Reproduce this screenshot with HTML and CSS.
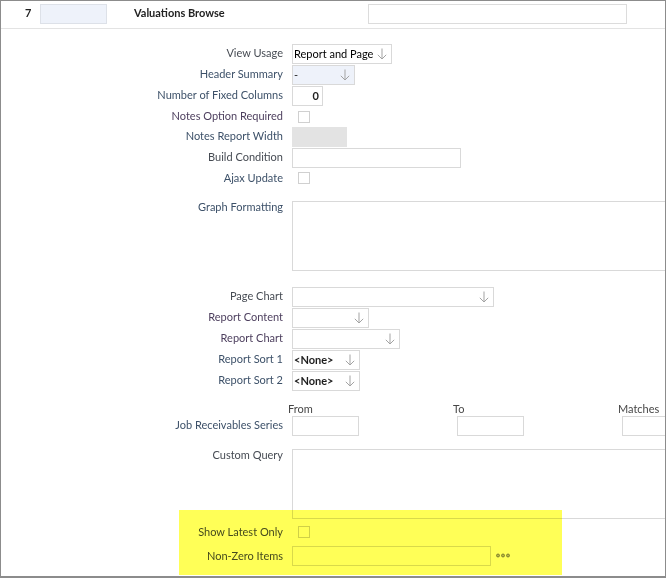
FILE: index.html
```html
<!DOCTYPE html>
<html>
<head>
<meta charset="utf-8">
<title>Valuations Browse</title>
<link rel="stylesheet" href="styles.css">
</head>
<body>
<div class="page">
  <div class="header">
    <span class="num">7</span>
    <span class="idbox"></span>
    <span class="title">Valuations Browse</span>
    <span class="hinput"></span>
  </div>

  <div class="form">
    <div class="row">
      <label class="lbl c-dark">View Usage</label>
      <div class="select w100"><span class="val strong">Report and Page</span><svg class="arrow" width="10" height="12" viewBox="0 0 10 12"><path d="M5 0.5V11M0.8 6.8L5 11L9.2 6.8" fill="none" stroke="#a3a3a3" stroke-width="1"/></svg></div>
    </div>
    <div class="row">
      <label class="lbl c-blue">Header Summary</label>
      <div class="select w63 tinted"><span class="val">-</span><svg class="arrow" width="10" height="12" viewBox="0 0 10 12"><path d="M5 0.5V11M0.8 6.8L5 11L9.2 6.8" fill="none" stroke="#a3a3a3" stroke-width="1"/></svg></div>
    </div>
    <div class="row">
      <label class="lbl c-blue">Number of Fixed Columns</label>
      <div class="input w31 num-input">0</div>
    </div>
    <div class="row chk first">
      <label class="lbl c-purple">Notes Option Required</label>
      <span class="cb"></span>
    </div>
    <div class="row">
      <label class="lbl c-blue">Notes Report Width</label>
      <div class="greybox"></div>
    </div>
    <div class="row">
      <label class="lbl c-dark">Build Condition</label>
      <div class="input w169"></div>
    </div>
    <div class="row chk">
      <label class="lbl c-blue">Ajax Update</label>
      <span class="cb"></span>
    </div>
    <div class="row tall graph">
      <label class="lbl c-blue">Graph Formatting</label>
      <div class="textarea"></div>
    </div>

    <div class="row pagechart">
      <label class="lbl c-dark">Page Chart</label>
      <div class="select w202"><span class="val"></span><svg class="arrow" width="10" height="12" viewBox="0 0 10 12"><path d="M5 0.5V11M0.8 6.8L5 11L9.2 6.8" fill="none" stroke="#a3a3a3" stroke-width="1"/></svg></div>
    </div>
    <div class="row">
      <label class="lbl c-purple">Report Content</label>
      <div class="select w77"><span class="val"></span><svg class="arrow" width="10" height="12" viewBox="0 0 10 12"><path d="M5 0.5V11M0.8 6.8L5 11L9.2 6.8" fill="none" stroke="#a3a3a3" stroke-width="1"/></svg></div>
    </div>
    <div class="row">
      <label class="lbl c-purple">Report Chart</label>
      <div class="select w108"><span class="val"></span><svg class="arrow" width="10" height="12" viewBox="0 0 10 12"><path d="M5 0.5V11M0.8 6.8L5 11L9.2 6.8" fill="none" stroke="#a3a3a3" stroke-width="1"/></svg></div>
    </div>
    <div class="row">
      <label class="lbl c-blue">Report Sort 1</label>
      <div class="select w68"><span class="val bold">&lt;None&gt;</span><svg class="arrow" width="10" height="12" viewBox="0 0 10 12"><path d="M5 0.5V11M0.8 6.8L5 11L9.2 6.8" fill="none" stroke="#a3a3a3" stroke-width="1"/></svg></div>
    </div>
    <div class="row">
      <label class="lbl c-blue">Report Sort 2</label>
      <div class="select w68"><span class="val bold">&lt;None&gt;</span><svg class="arrow" width="10" height="12" viewBox="0 0 10 12"><path d="M5 0.5V11M0.8 6.8L5 11L9.2 6.8" fill="none" stroke="#a3a3a3" stroke-width="1"/></svg></div>
    </div>

    <div class="row series">
      <label class="lbl c-blue">Job Receivables Series</label>
      <div class="series-grid">
        <div class="scol"><div class="shead">From</div><div class="input w67"></div></div>
        <div class="scol"><div class="shead">To</div><div class="input w67"></div></div>
        <div class="scol"><div class="shead">Matches</div><div class="input w67"></div></div>
      </div>
    </div>

    <div class="row tall custom">
      <label class="lbl c-dark">Custom Query</label>
      <div class="textarea"></div>
    </div>

    <div class="row chk latest">
      <label class="lbl c-dark">Show Latest Only</label>
      <span class="cb"></span>
    </div>
    <div class="row nonzero">
      <label class="lbl c-dark">Non-Zero Items</label>
      <div class="input w199"></div>
      <svg class="dots" width="14" height="5" viewBox="0 0 14 5"><circle cx="2" cy="2.5" r="1.5" fill="#b8b8b8" stroke="#6e6e6e" stroke-width="0.8"/><circle cx="7" cy="2.5" r="1.5" fill="#b8b8b8" stroke="#6e6e6e" stroke-width="0.8"/><circle cx="12" cy="2.5" r="1.5" fill="#b8b8b8" stroke="#6e6e6e" stroke-width="0.8"/></svg>
    </div>
  </div>

  <div class="highlight"></div>
</div>
</body>
</html>
```

FILE: styles.css
```css
html, body {
  margin: 0;
  padding: 0;
  background: #ffffff;
}

body {
  font-family: Lato, "Liberation Sans", Arial, sans-serif;
  font-size: 11px;
  color: #222;
}

.page {
  position: relative;
  box-sizing: border-box;
  width: 666px;
  height: 578px;
  border: 1px solid #8c8c8c;
  border-bottom-width: 2px;
  overflow: hidden;
  background: #fff;
}

/* header */
.header {
  box-sizing: border-box;
  height: 28px;
  display: flex;
  align-items: flex-start;
  padding: 3px 0 0 24px;
  border-bottom: 1px solid #e3e3e3;
}

.num {
  width: 15px;
  line-height: 18px;
  font-weight: 700;
  color: #222;
}

.idbox {
  box-sizing: border-box;
  width: 67px;
  height: 20px;
  background: #eef2fa;
  border: 1px solid #dde1e8;
}

.title {
  width: 234px;
  margin-left: 27px;
  line-height: 18px;
  font-weight: 700;
  color: #222;
}

.hinput {
  box-sizing: border-box;
  width: 259px;
  height: 20px;
  border: 1px solid #dcdcdc;
}

/* form */
.form {
  padding-top: 15px;
}

.row {
  display: flex;
  align-items: flex-start;
  height: 21px;
}

.lbl {
  flex: none;
  width: 282px;
  margin-right: 9px;
  text-align: right;
  line-height: 18px;
  white-space: nowrap;
}

.c-blue { color: #3d5169; }
.c-dark { color: #464b53; }
.c-purple { color: #4d3f5e; }

.select,
.input,
.textarea {
  box-sizing: border-box;
  flex: none;
  border: 1px solid #d9d9d9;
  background: #fff;
}

.select {
  height: 20px;
  display: flex;
  align-items: center;
  justify-content: space-between;
  padding: 0 4px 0 1px;
}

.select.tinted {
  background: #eef2fa;
}

.val {
  line-height: 16px;
  color: #222;
}

.val.strong {
  font-weight: 400;
  color: #000;
}

.val.bold {
  font-weight: 700;
  color: #1e1e1e;
}

.arrow {
  display: block;
  flex: none;
}

.input {
  height: 20px;
}

.num-input {
  text-align: right;
  padding-right: 3px;
  line-height: 17px;
  font-weight: 700;
}

.w31 { width: 31px; }
.w63 { width: 63px; }
.w67 { width: 67px; }
.w68 { width: 68px; }
.w77 { width: 77px; }
.w100 { width: 100px; }
.w108 { width: 108px; }
.w169 { width: 169px; }
.w199 { width: 199px; }
.w202 { width: 202px; }

.greybox {
  width: 55px;
  height: 20px;
  background: #e3e3e3;
}

.row.chk {
  height: 20px;
}

.cb {
  box-sizing: border-box;
  display: block;
  width: 12px;
  height: 12px;
  margin-left: 6px;
  margin-top: 3px;
  border: 1px solid #d0d0d0;
  background: #fff;
}

.row.chk.first .cb {
  margin-top: 4px;
}

.row.tall {
  height: 70px;
}

.row.tall .lbl {
  line-height: 11px;
}

.textarea {
  width: 420px;
  height: 70px;
}

.row.graph {
  margin-top: 12px;
}

.row.pagechart {
  margin-top: 16px;
}

/* series */
.row.series {
  height: auto;
  align-items: flex-end;
  margin-top: 10px;
}

.row.series .lbl {
  margin-bottom: 2px;
}

.series-grid {
  display: flex;
}

.scol {
  flex: none;
  width: 165px;
}

.shead {
  margin-left: -4px;
  line-height: 14px;
  color: #474747;
}

.row.custom {
  margin-top: 13px;
}

.row.latest {
  height: 21px;
  margin-top: 2px;
}

.row.latest .lbl {
  line-height: 21px;
}

.row.latest .cb {
  margin-top: 5px;
}

.row.nonzero {
  margin-top: 3px;
  align-items: center;
}

.dots {
  display: block;
  margin-left: 5px;
}

/* annotation marker over the last two fields */
.highlight {
  position: absolute;
  left: 178px;
  top: 509px;
  width: 383px;
  height: 65px;
  background: #ffff57;
  mix-blend-mode: multiply;
  pointer-events: none;
}
```
